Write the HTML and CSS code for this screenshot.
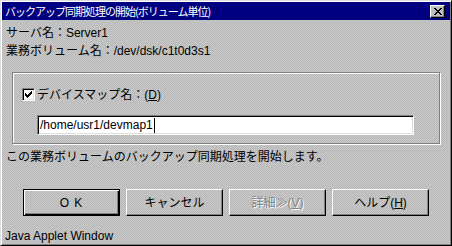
FILE: index.html
```html
<!DOCTYPE html>
<html lang="ja">
<head>
  <meta charset="UTF-8" />
  <title>バックアップ同期処理の開始</title>
  <link rel="stylesheet" href="styles.css">
</head>
<body>
  <div class="window">
    <div class="titlebar">
      <span class="title">バックアップ同期処理の開始(ボリューム単位)</span>
      <span class="close">
        <svg width="8" height="7" viewBox="0 0 8 7" shape-rendering="crispEdges">
          <path d="M0 0h2v1h-2z M6 0h2v1h-2z M1 1h2v1h-2z M5 1h2v1h-2z M2 2h4v1h-4z M3 3h2v1h-2z M2 4h4v1h-4z M1 5h2v1h-2z M5 5h2v1h-2z M0 6h2v1h-2z M6 6h2v1h-2z" fill="#000"/>
        </svg>
      </span>
    </div>

    <div class="content">
      <div class="info">サーバ名：Server1</div>
      <div class="info">業務ボリューム名：/dev/dsk/c1t0d3s1</div>

      <div class="group">
        <div class="check-row">
          <span class="checkbox">
            <svg width="7" height="7" viewBox="0 0 7 7" shape-rendering="crispEdges">
              <path d="M0 2h1v3h-1z M1 3h1v3h-1z M2 4h1v3h-1z M3 3h1v3h-1z M4 2h1v3h-1z M5 1h1v3h-1z M6 0h1v3h-1z" fill="#000"/>
            </svg>
          </span>
          <span class="check-label">デバイスマップ名：(<u>D</u>)</span>
        </div>
        <div class="field"><span>/home/usr1/devmap1</span><span class="caret"></span></div>
      </div>

      <div class="message">この業務ボリュームのバックアップ同期処理を開始します。</div>

      <div class="buttons">
        <div class="btn default">O K</div>
        <div class="btn">キャンセル</div>
        <div class="btn disabled">詳細≫(<u>V</u>)</div>
        <div class="btn">ヘルプ(<u>H</u>)</div>
      </div>
    </div>

    <div class="status">Java Applet Window</div>
  </div>
</body>
</html>
```

FILE: styles.css
```css
body {
  margin: 0;
  font-family: "Liberation Sans", "Noto Sans CJK JP", sans-serif;
  font-size: 12px;
  color: #000;
}
.window {
  box-sizing: border-box;
  width: 452px;
  height: 246px;
  overflow: hidden;
  background: repeating-conic-gradient(#c8c8c8 0 25%, #b9b9b9 0 50%) 0 0 / 2px 2px;
  border: 1px solid;
  border-color: #dfdfdf #000 #000 #dfdfdf;
  padding: 1px;
  box-shadow: inset 1px 1px #fff, inset -1px -1px #808080;
}
.titlebar {
  height: 18px;
  background: #000080;
  display: flex;
  align-items: center;
  justify-content: space-between;
  padding: 0 3px;
}
.title {
  color: #fff;
  font-size: 11px;
  letter-spacing: -1px;
  line-height: 18px;
  font-family: "Noto Sans CJK JP", sans-serif;
}
.close {
  box-sizing: border-box;
  width: 15px;
  height: 13px;
  background: #c0c0c0;
  border: 1px solid;
  border-color: #fff #000 #000 #fff;
  box-shadow: inset -1px -1px #808080;
  display: flex;
  align-items: center;
  justify-content: center;
  margin-right: 2px;
}
.content {
  padding: 4px 0 0 4px;
}
.info {
  line-height: 18px;
}
.group {
  box-sizing: border-box;
  width: 428px;
  height: 72px;
  margin: 12px 0 0 6px;
  border: 1px solid #808080;
  box-shadow: 1px 1px #fff, inset 1px 1px #fff;
  padding: 15px 0 0 9px;
}
.check-row {
  display: flex;
  align-items: center;
  height: 13px;
}
.checkbox {
  box-sizing: border-box;
  width: 13px;
  height: 13px;
  background: #fff;
  border: 1px solid;
  border-color: #808080 #fff #fff #808080;
  box-shadow: inset 1px 1px #000, inset -1px -1px #dfdfdf;
  display: flex;
  align-items: center;
  justify-content: center;
}
.check-label {
  margin-left: 2px;
  line-height: 16px;
}
.field {
  box-sizing: border-box;
  width: 377px;
  height: 20px;
  margin: 14px 0 0 15px;
  background: #fff;
  border: 1px solid;
  border-color: #808080 #fff #fff #808080;
  box-shadow: inset 1px 1px #000, inset -1px -1px #dfdfdf;
  padding: 0 0 0 2px;
  display: flex;
  align-items: center;
  line-height: 16px;
}
.caret {
  width: 0;
  height: 15px;
  border-left: 1px solid #000;
  margin-left: 1px;
}
.message {
  margin-top: 4px;
  line-height: 18px;
}
.buttons {
  display: flex;
  gap: 6px;
  margin: 23px 0 0 17px;
}
.btn {
  box-sizing: border-box;
  width: 97px;
  height: 27px;
  border: 1px solid;
  border-color: #fff #000 #000 #fff;
  box-shadow: inset -1px -1px #808080;
  display: flex;
  align-items: center;
  justify-content: center;
  line-height: 16px;
}
.btn.default {
  border-color: #000;
  box-shadow: inset 1px 1px #fff, inset -1px -1px #000, inset -2px -2px #808080;
  letter-spacing: 1px;
}
.btn.disabled {
  color: #808080;
  text-shadow: 1px 1px 0 #fff;
}
.status {
  margin: 12px 0 0 3px;
  line-height: 16px;
}
```
